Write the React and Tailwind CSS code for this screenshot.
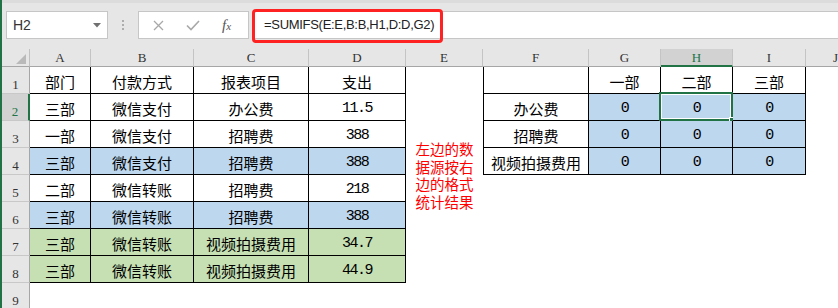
import React from 'react'

const CJK = "font-['Noto_Sans_CJK_SC',sans-serif]"
const MONO = "font-['Liberation_Mono','Noto_Sans_CJK_SC',monospace] tracking-[-1.5px]"
const HEAD = "font-['Liberation_Serif',serif] text-[13px]"

const BLUE = 'bg-[#bdd7ee]'
const GREEN = 'bg-[#c6e0b4]'

const leftRows = [
  { cells: ['部门', '付款方式', '报表项目', '支出'], fill: 'bg-white' },
  { cells: ['三部', '微信支付', '办公费', '11.5'], fill: 'bg-white' },
  { cells: ['一部', '微信支付', '招聘费', '388'], fill: 'bg-white' },
  { cells: ['三部', '微信支付', '招聘费', '388'], fill: BLUE },
  { cells: ['二部', '微信转账', '招聘费', '218'], fill: 'bg-white' },
  { cells: ['三部', '微信转账', '招聘费', '388'], fill: BLUE },
  { cells: ['三部', '微信转账', '视频拍摄费用', '34.7'], fill: GREEN },
  { cells: ['三部', '微信转账', '视频拍摄费用', '44.9'], fill: GREEN },
]

const rightRows = [
  ['', '一部', '二部', '三部'],
  ['办公费', '0', '0', '0'],
  ['招聘费', '0', '0', '0'],
  ['视频拍摄费用', '0', '0', '0'],
]

const cols = ['A', 'B', 'C', 'D', 'E', 'F', 'G', 'H', 'I', 'J']

function Cell({ text, bordered, fill = 'bg-white', extra = '', children }) {
  const isNum = /^[0-9.]+$/.test(text || '')
  return (
    <div
      className={`relative flex items-center justify-center pt-[2px] border-r border-b ${bordered ? 'border-black' : 'border-transparent'} ${fill} ${extra} ${isNum ? MONO + ' text-[15px]' : CJK + ' text-[15px]'} text-black leading-none whitespace-nowrap`}
    >
      {text}
      {children}
    </div>
  )
}

function Selection() {
  return (
    <div className="absolute left-[-2px] top-[-2px] right-[-1px] bottom-[-1px] border-2 border-[#217346]">
      <div className="w-full h-full border border-white" />
      <div className="absolute right-[-5px] bottom-[-5px] w-[7px] h-[7px] bg-[#217346] border border-white" />
    </div>
  )
}

export default function App() {
  const grid = []

  // column header row
  grid.push(
    <div key="corner" className="flex items-end justify-end pr-[3px] pb-[2px] bg-[#e6e6e6] border-r border-b border-r-[#c0c0c0] border-b-[#a6a6a6]">
      <svg width="10" height="10" viewBox="0 0 10 10">
        <polygon points="10,0 10,10 0,10" fill="#b9b9b9" />
      </svg>
    </div>
  )
  cols.forEach((c) => {
    const active = c === 'H'
    grid.push(
      <div
        key={'h' + c}
        className={`flex items-center justify-center ${HEAD} leading-none ${active ? 'bg-[#d2d2d2] text-[#217346] border-b-2 border-b-[#217346]' : 'bg-[#e6e6e6] text-[#333] border-b border-b-[#a6a6a6]'} border-r border-r-[#c4c4c4]`}
      >
        {c}
      </div>
    )
  })

  for (let r = 1; r <= 9; r++) {
    const active = r === 2
    grid.push(
      <div
        key={'r' + r}
        className={`flex items-end justify-center pb-[2px] ${HEAD} leading-none border-b border-b-[#c8c8c8] ${active ? 'bg-[#d2d2d2] text-[#217346] border-r-2 border-r-[#217346]' : 'bg-[#e6e6e6] text-[#333] border-r border-r-[#a6a6a6]'}`}
      >
        {r}
      </div>
    )

    // A-D
    const left = leftRows[r - 1]
    for (let c = 0; c < 4; c++) {
      grid.push(
        <Cell key={`l${r}${c}`} text={left ? left.cells[c] : ''} bordered={!!left} fill={left ? left.fill : 'bg-white'} />
      )
    }

    // E (merged E1:E8), wrapped text
    if (r === 1) {
      grid.push(
        <div key="e" className="row-span-8 flex items-center justify-center bg-white">
          <p className={`w-[60px] text-center break-all ${CJK} text-[14.5px] leading-[17.5px] text-[#ff0000]`}>
            左边的数据源按右边的格式统计结果
          </p>
        </div>
      )
    } else if (r === 9) {
      grid.push(<div key="e9" className="bg-white" />)
    }

    // F-I
    const right = rightRows[r - 1]
    for (let c = 0; c < 4; c++) {
      const fill = right && r > 1 && c > 0 ? BLUE : 'bg-white'
      grid.push(
        <Cell
          key={`r${r}${c}`}
          text={right ? right[c] : ''}
          bordered={!!right}
          fill={fill}
          extra={c === 0 ? (right ? 'border-l border-l-black' : 'border-l border-l-transparent') : ''}
        >
          {r === 2 && c === 2 && <Selection />}
        </Cell>
      )
    }

    // J
    grid.push(<div key={'j' + r} className="bg-white" />)
  }

  return (
    <div className="w-[838px] h-[308px] overflow-hidden flex bg-white">
      <div className="w-[2px] shrink-0 bg-[#217346]" />
      <div className="flex-1 flex flex-col min-w-0 overflow-hidden">
        <div className="h-[49px] shrink-0 bg-[#e6e6e6] border-t-[3px] border-t-[#dcdcdc] pt-[8px] flex items-start">
          <div className="ml-[4px] w-[102px] h-[28px] bg-white border border-[#c6c6c6] flex items-center justify-between pl-[6px] pr-[6px]">
            <span className="font-['Liberation_Sans',sans-serif] text-[14px] text-[#333]">H2</span>
            <svg width="8" height="5" viewBox="0 0 8 5">
              <polygon points="0,0 8,0 4,4.5" fill="#707070" />
            </svg>
          </div>
          <svg className="ml-[13px] mt-[8px]" width="4" height="12" viewBox="0 0 4 12">
            <circle cx="2" cy="2" r="1" fill="#9a9a9a" />
            <circle cx="2" cy="6" r="1" fill="#9a9a9a" />
            <circle cx="2" cy="10" r="1" fill="#9a9a9a" />
          </svg>
          <div className="ml-[13px] w-[111px] h-[28px] bg-white border border-[#c6c6c6] flex items-center">
            <svg className="ml-[14px]" width="11" height="11" viewBox="0 0 11 11">
              <path d="M1 1 L10 10 M10 1 L1 10" stroke="#a8a8a8" strokeWidth="1.3" fill="none" />
            </svg>
            <svg className="ml-[22px]" width="14" height="11" viewBox="0 0 14 11">
              <path d="M1 5.5 L5 9.5 L13 1" stroke="#a8a8a8" strokeWidth="1.6" fill="none" />
            </svg>
            <span className="ml-[22px] font-['Liberation_Serif',serif] italic text-[15px] text-[#555] leading-none">
              f<span className="text-[11px]">x</span>
            </span>
          </div>
          <div className="ml-[4px] flex-1 h-[28px] bg-white border-y border-l border-[#c6c6c6] relative flex items-center pl-[10px]">
            <span className="font-['Liberation_Sans',sans-serif] text-[13px] tracking-[-0.3px] text-[#222]">
              =SUMIFS(E:E,B:B,H1,D:D,G2)
            </span>
            <div className="absolute left-[-2px] top-[-3px] w-[191px] h-[34px] border-[3px] border-[#ff2222] rounded-[4px]" />
          </div>
        </div>
        <div className="grid grid-cols-[28px_61px_103px_115px_97px_77px_106px_72px_72px_73px_60px] grid-rows-[18px_repeat(9,27px)]">
          {grid}
        </div>
      </div>
    </div>
  )
}
